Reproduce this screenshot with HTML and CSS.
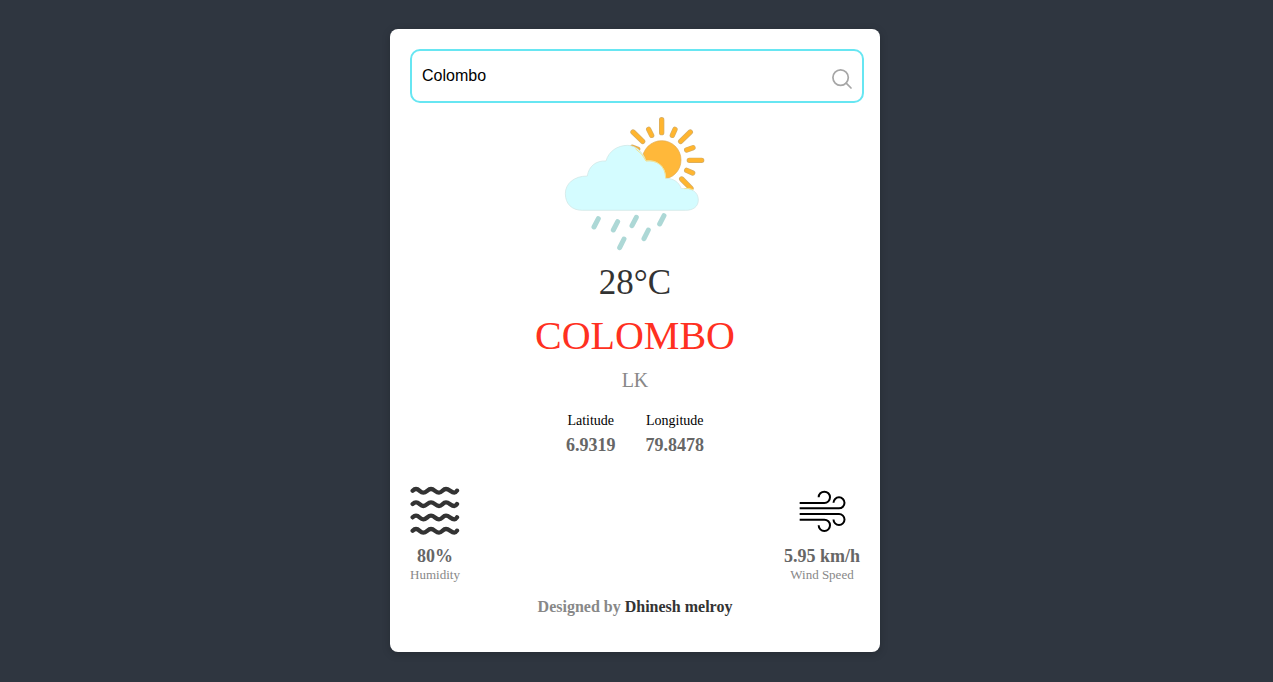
FILE: index.html
```html
<!DOCTYPE html>
<html lang="en">
<head>
<meta charset="utf-8">
<meta name="viewport" content="width=device-width, initial-scale=1">
<title>Weather</title>
<link rel="stylesheet" href="styles.css">
</head>
<body>
<main class="card">
  <form class="search">
    <input class="search-input" type="text" value="Colombo" aria-label="City">
    <button class="search-button" type="button" aria-label="Search">
      <svg width="20" height="20" viewBox="1 1 20 20" fill="none" stroke="#a6a6a6" stroke-width="1.7" stroke-linecap="round"><circle cx="9.6" cy="9.6" r="7.7"/><path d="M15.2 15.2l4.8 4.8"/></svg>
    </button>
  </form>

  <svg class="weather-icon" viewBox="0 3 480 432" aria-hidden="true">
    <g stroke="#d3ae6b" stroke-width="16" stroke-linecap="round">
      <path id="rays" d="M320 29V68M281 58l9 18M360 58l-8 18M234 66l29 28M406 66l-29 28M414 113l-19 7M403 151h37M395 181l18 8M380 207l28 28M232 112l16 6"/>
    </g>
    <use href="#rays" stroke="#ffb52f" stroke-width="12" stroke-linecap="round"/>
    <circle cx="320" cy="150" r="58" fill="#ffb83a" stroke="#e0ab50" stroke-width="2"/>
    <path d="M82 301C50 301 31 281 31 251C31 221 57 198 97 198C101 169 123 151 153 153C161 124 187 106 218 106C245 107 265 128 273 153C303 149 332 166 332 205C355 205 372 216 379 236C409 232 430 246 430 270C430 290 414 301 392 301Z" fill="#d4fcff" stroke="#cfe4e3" stroke-width="2"/>
    <path d="M241 116Q263 130 273 153C303 149 332 166 332 205" fill="none" stroke="#f5e58f" stroke-width="3"/>
    <path d="M388 236Q401 233 414 239" fill="none" stroke="#f5e58f" stroke-width="3"/>
    <g stroke="#add8d6" stroke-width="15" stroke-linecap="round">
      <path d="M130 326l-13 25M188 335l-13 25M244 322l-13 25M327 317l-13 25M280 360l-13 26M207 387l-13 26"/>
    </g>
  </svg>

  <div class="temperature">28°C</div>
  <h1 class="city">COLOMBO</h1>
  <div class="country">LK</div>

  <div class="coordinates">
    <div class="coordinate"><span class="label">Latitude</span><span class="value">6.9319</span></div>
    <div class="coordinate"><span class="label">Longitude</span><span class="value">79.8478</span></div>
  </div>

  <div class="details">
    <div class="detail">
      <svg class="detail-icon" viewBox="0 0 150 150" fill="none" stroke="#333" stroke-width="13" stroke-linecap="round" stroke-linejoin="round" aria-hidden="true">
        <path id="wave" d="M8 14C11 11 14 9 18 9C28 9 30 20 40 20S53 9 63 9S77 20 87 20S98 9 108 9S123 20 133 20C137 20 139 17 141 14"/>
        <use href="#wave" y="40"/><use href="#wave" y="80"/><use href="#wave" y="120"/>
      </svg>
      <span class="value">80%</span>
      <span class="caption">Humidity</span>
    </div>
    <div class="detail">
      <svg class="detail-icon" viewBox="0 0 150 150" fill="none" stroke="#000" stroke-width="6" aria-hidden="true">
        <path d="M8 51H82A17 17 0 1 0 65 34M8 67H126A16.5 16.5 0 1 0 109.5 50.5M8 84H126A16.5 16.5 0 1 1 109.5 100.5M8 101H82A17 17 0 1 1 65 118"/>
      </svg>
      <span class="value">5.95 km/h</span>
      <span class="caption">Wind Speed</span>
    </div>
  </div>

  <footer class="credit">Designed by <span class="author">Dhinesh melroy</span></footer>
</main>
</body>
</html>
```
FILE: styles.css
```css
body {
  margin: 0;
  padding: 29px 3px 29px 0;
  background: #2f3640;
  font-family: "Liberation Serif", "Times New Roman", serif;
}

.card {
  box-sizing: border-box;
  max-width: 490px;
  margin: 0 auto;
  padding: 20px 20px 36px;
  display: flex;
  flex-direction: column;
  align-items: center;
  background: #fff;
  border-radius: 8px;
  box-shadow: 0 2px 8px rgba(0, 0, 0, 0.2);
}

.search {
  box-sizing: border-box;
  align-self: stretch;
  display: flex;
  align-items: center;
  height: 54px;
  margin-right: -4px;
  padding: 0 10px;
  border: 2px solid #67e6f2;
  border-radius: 10px;
}

.search-input {
  flex: 1;
  min-width: 0;
  padding: 0;
  border: 0;
  outline: 0;
  background: transparent;
  color: #000;
  font: 16px/18px "Liberation Sans", Arial, sans-serif;
}

.search-button {
  display: flex;
  padding: 6px 0 0;
  border: 0;
  background: transparent;
  cursor: pointer;
}

.weather-icon {
  width: 160px;
  height: 144px;
  margin-top: 8px;
}

.temperature {
  margin-top: 8px;
  color: #333;
  font-size: 35px;
  line-height: 40px;
}

.city {
  margin: 10px 0 0;
  color: #ff3021;
  font-size: 40px;
  font-weight: 400;
  line-height: 46px;
}

.country {
  margin-top: 10px;
  color: #888;
  font-size: 20px;
  line-height: 22px;
}

.coordinates {
  display: flex;
  gap: 30px;
  margin-top: 22px;
}

.coordinate {
  display: flex;
  flex-direction: column;
  align-items: center;
  gap: 6px;
}

.label {
  color: #000;
  font-size: 14px;
  line-height: 16px;
}

.value {
  color: #666;
  font-size: 18px;
  font-weight: 700;
  line-height: 20px;
}

.details {
  align-self: stretch;
  display: flex;
  justify-content: space-between;
  margin-top: 31px;
}

.detail {
  display: flex;
  flex-direction: column;
  align-items: center;
}

.detail-icon {
  width: 50px;
  height: 50px;
  margin-bottom: 10px;
}

.caption {
  color: #888;
  font-size: 13px;
  line-height: 18px;
}

.credit {
  margin-top: 14px;
  color: #888;
  font-size: 16px;
  font-weight: 700;
  line-height: 18px;
}

.author {
  color: #333;
}
```
